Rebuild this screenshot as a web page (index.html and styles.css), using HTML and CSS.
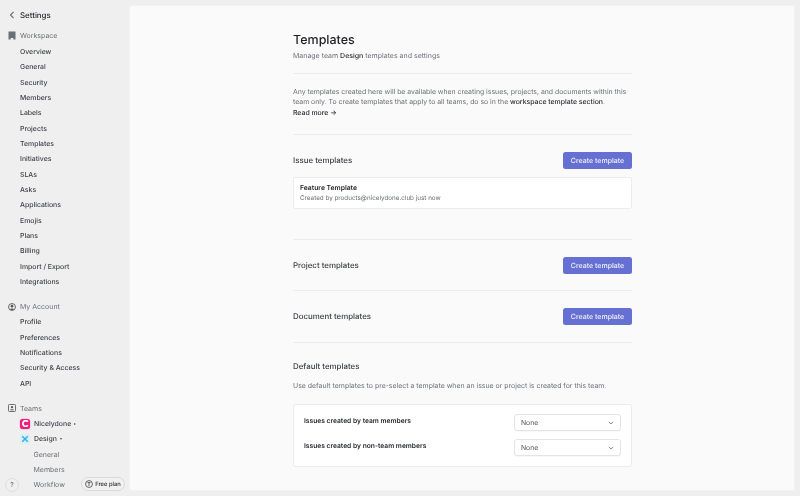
FILE: index.html
```html
<!DOCTYPE html>
<html lang="en">
<head>
<meta charset="utf-8">
<title>Settings - Templates</title>
<link rel="stylesheet" href="styles.css">
</head>
<body>
<div class="app">
  <aside class="sidebar">
    <div class="back">
      <svg class="chev" width="6" height="8" viewBox="0 0 6 8"><path d="M4.500 .8 1.500 4l3 3.200" fill="none" stroke="#6b6f76" stroke-width="1.200"/></svg>
      <span>Settings</span>
    </div>
    <div class="group-head first">
      <svg class="gicon" width="8" height="9" viewBox="0 0 8 9"><path d="M.5 .5h7v8H5.300V7H2.700v1.500H.5z" fill="#6b6f76"/></svg>
      <span>Workspace</span>
    </div>
    <a class="item">Overview</a>
    <a class="item">General</a>
    <a class="item">Security</a>
    <a class="item">Members</a>
    <a class="item">Labels</a>
    <a class="item">Projects</a>
    <a class="item">Templates</a>
    <a class="item">Initiatives</a>
    <a class="item">SLAs</a>
    <a class="item">Asks</a>
    <a class="item">Applications</a>
    <a class="item">Emojis</a>
    <a class="item">Plans</a>
    <a class="item">Billing</a>
    <a class="item">Import / Export</a>
    <a class="item">Integrations</a>
    <div class="group-head">
      <svg class="gicon" width="8" height="8" viewBox="0 0 12 12"><circle cx="6" cy="6" r="5.200" fill="none" stroke="#555" stroke-width="1.300"/><circle cx="6" cy="4.800" r="2" fill="#555"/><path d="M2.800 9.400C3.600 8 8.400 8 9.200 9.400L6 10.800z" fill="#555"/></svg>
      <span>My Account</span>
    </div>
    <a class="item">Profile</a>
    <a class="item">Preferences</a>
    <a class="item">Notifications</a>
    <a class="item">Security &amp; Access</a>
    <a class="item">API</a>
    <div class="group-head">
      <svg class="gicon" width="8" height="8" viewBox="0 0 12 12"><rect x=".7" y=".7" width="10.600" height="10.600" rx="1.500" fill="none" stroke="#555" stroke-width="1.300"/><circle cx="6" cy="4.700" r="1.700" fill="#555"/><path d="M3 9.200c.4-1.900 5.600-1.900 6 0z" fill="#555"/></svg>
      <span>Teams</span>
    </div>
    <div class="team">
      <span class="avatar pink"><svg width="7" height="7" viewBox="0 0 8 8"><path d="M6.700 2A3.200 3.200 0 1 0 6.700 6" fill="none" stroke="#fff" stroke-width="2"/></svg></span>
      <span>Nicelydone</span>
      <span class="caret right"></span>
    </div>
    <div class="team">
      <span class="avatar blue"><svg width="8" height="8" viewBox="0 0 10 10"><path d="M1.500 1.500l7 7M8.500 1.500l-7 7" stroke="#2bb4e8" stroke-width="1.800"/></svg></span>
      <span>Design</span>
      <span class="caret down"></span>
    </div>
    <a class="sub">General</a>
    <a class="sub">Members</a>
    <a class="sub">Workflow</a>
    <div class="help">?</div>
    <div class="plan">
      <svg width="8" height="8" viewBox="0 0 10 10"><circle cx="5" cy="5" r="4.300" fill="none" stroke="#333" stroke-width=".9"/><path d="M3 3.200h4M5 3.200V7.500" stroke="#333" stroke-width=".9" fill="none"/></svg>
      <span>Free plan</span>
    </div>
  </aside>
  <main class="panel">
    <div class="content">
      <h1>Templates</h1>
      <p class="lead">Manage team <b>Design</b> templates and settings</p>
      <hr class="rule intro-rule">
      <p class="intro">Any templates created here will be available when creating issues, projects, and documents within this team only. To create templates that apply to all teams, do so in the <b>workspace template section</b>.<br><b>Read more →</b></p>
      <hr class="rule r2">
      <div class="row">
        <h2>Issue templates</h2>
        <button class="btn">Create template</button>
      </div>
      <div class="card">
        <div class="card-title">Feature Template</div>
        <div class="card-meta">Created by products@nicelydone.club just now</div>
      </div>
      <hr class="rule r3">
      <div class="row">
        <h2>Project templates</h2>
        <button class="btn">Create template</button>
      </div>
      <hr class="rule r4">
      <div class="row">
        <h2>Document templates</h2>
        <button class="btn">Create template</button>
      </div>
      <hr class="rule r5">
      <h2 class="default-title">Default templates</h2>
      <p class="default-note">Use default templates to pre-select a template when an issue or project is created for this team.</p>
      <div class="defaults">
        <div class="drow">
          <span class="dlabel">Issues created by team members</span>
          <div class="select"><span>None</span><svg width="6" height="4" viewBox="0 0 7 5"><path d="M.8 1 3.500 3.800 6.200 1" fill="none" stroke="#6b6f76" stroke-width="1"/></svg></div>
        </div>
        <div class="drow">
          <span class="dlabel">Issues created by non-team members</span>
          <div class="select"><span>None</span><svg width="6" height="4" viewBox="0 0 7 5"><path d="M.8 1 3.500 3.800 6.200 1" fill="none" stroke="#6b6f76" stroke-width="1"/></svg></div>
        </div>
      </div>
    </div>
  </main>
</div>
</body>
</html>
```
FILE: styles.css
```css
* { box-sizing: border-box; }
html, body { margin: 0; height: 496px; overflow: hidden; }
body { font-family: Inter, "Liberation Sans", sans-serif; background: #efefef; color: #282a30; font-size: 7px; text-rendering: geometricPrecision; }
.app { display: flex; height: 496px; padding: 5px 5px 5px 0; will-change: opacity; }
.sidebar { position: relative; width: 129px; flex: none; overflow: hidden; margin: -5px 0; padding: 8px 0 0 7px; }
.back { display: flex; align-items: center; height: 13px; font-size: 7.900px; font-weight: 500; color: #282a30; }
.chev { flex: none; margin-left: 2px; margin-right: 5px; }
.group-head { display: flex; align-items: center; gap: 4px; height: 15px; margin: 10px 0 0; color: #6b6f76; font-size: 7px; }
.group-head.first { margin: 7px 0 1px; }
.gicon { margin-left: 1px; flex: none; }
.item { display: flex; align-items: center; height: 15.330px; padding-left: 13px; color: #3c3f46; font-size: 6.900px; font-weight: 500; }
.team { display: flex; align-items: center; height: 15.330px; padding-left: 13px; gap: 4px; font-size: 6.900px; font-weight: 500; color: #3c3f46; }
.avatar { width: 10px; height: 10px; border-radius: 2.500px; display: flex; align-items: center; justify-content: center; flex: none; }
.pink { background: #f01f7c; box-shadow: 0 0 0 .5px rgba(240,31,124,.25); }
.blue { background: #dcedf6; }
.caret { width: 0; height: 0; margin-left: -1px; }
.caret.right { border-left: 2px solid #555; border-top: 1.500px solid transparent; border-bottom: 1.500px solid transparent; }
.caret.down { border-top: 2px solid #555; border-left: 1.500px solid transparent; border-right: 1.500px solid transparent; }
.sub { display: flex; align-items: center; height: 15.330px; padding-left: 26.500px; color: #6b6f76; font-size: 7px; }
.help { position: absolute; left: 5px; bottom: 4.500px; width: 14px; height: 14px; border-radius: 50%; border: 1px solid #dcdcdc; background: #f0f0f0; display: flex; align-items: center; justify-content: center; font-size: 6.500px; color: #444; }
.plan { position: absolute; left: 81px; bottom: 5px; width: 44px; height: 14px; border-radius: 7px; border: 1px solid #d9d9d9; background: #f1f1f1; display: flex; align-items: center; justify-content: center; gap: 2px; font-size: 5.800px; font-weight: 500; color: #282a30; }
.panel { flex: 1; background: #fafafa; border: 1px solid #f3f3f3; border-radius: 3px; overflow: hidden; padding-left: 163px; }
.content { width: 339px; padding-top: 26px; }
h1 { margin: 0; font-size: 12.500px; font-weight: 500; line-height: 18px; color: #1f2024; }
.lead { margin: 1px 0 0; font-size: 7px; line-height: 10px; color: #6b6f76; }
b { font-weight: 500; color: #282a30; }
.rule { height: 1px; border: 0; background: #ececec; margin: 0; }
.intro-rule { margin-top: 12px; }
.intro { margin: 12.500px 0 0; font-size: 6.900px; line-height: 10.500px; color: #6b6f76; }
.r2 { margin-top: 16px; }
.row { display: flex; align-items: center; justify-content: space-between; height: 17px; margin-top: 17px; }
h2 { margin: 0; padding-bottom: 1px; font-size: 7.900px; font-weight: 500; color: #3c3f46; }
.btn { width: 69px; height: 17px; border: 0; border-radius: 2.500px; background: #6670d2; color: #f4f4fb; font: 500 7px Inter, "Liberation Sans", sans-serif; padding: 0; text-rendering: geometricPrecision; }
.card { height: 32px; margin-top: 8px; background: #fff; border: 1px solid #ececec; border-radius: 2px; padding: 5px 6px; }
.card-title { font-size: 6.800px; font-weight: 600; line-height: 10px; color: #282a30; }
.card-meta { font-size: 6.300px; line-height: 10px; color: #6b6f76; }
.r3 { margin-top: 30px; }
.r4 { margin-top: 16px; }
.r5 { margin-top: 17px; }
.default-title { margin-top: 17px; padding: 0; line-height: 12px; }
.default-note { margin: 9px 0 0; font-size: 6.950px; line-height: 10px; color: #6b6f76; }
.defaults { margin-top: 13px; height: 63px; background: #fff; border: 1px solid #ececec; border-radius: 3px; padding: 9px 10px 0 10px; display: flex; flex-direction: column; gap: 8px; }
.drow { display: flex; align-items: flex-start; justify-content: space-between; height: 17px; }
.dlabel { font-size: 6.700px; font-weight: 600; color: #282a30; line-height: 14px; }
.select { width: 107px; height: 17px; border: 1px solid #e4e4e4; border-radius: 3px; background: #fff; display: flex; align-items: center; justify-content: space-between; padding: 0 6px; font-size: 6.800px; color: #555; box-shadow: 0 1px 1px rgba(0,0,0,.03); }
```
